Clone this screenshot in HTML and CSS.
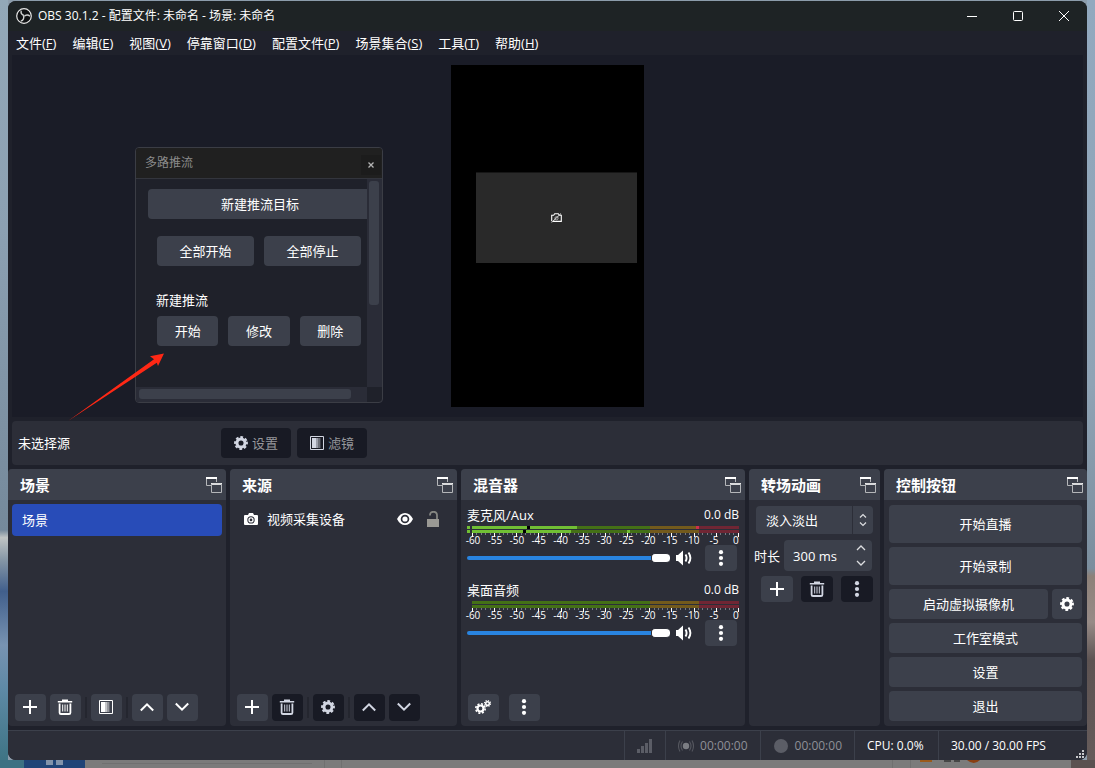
FILE: index.html
```html
<!DOCTYPE html>
<html lang="zh-CN">
<head>
<meta charset="utf-8">
<title>OBS 30.1.2</title>
<link rel="stylesheet" href="styles.css">
</head>
<body>
<svg class="sprite" aria-hidden="true">
  <symbol id="gear" viewBox="0 0 16 16"><g fill="none" stroke="currentColor"><circle cx="8" cy="8" r="4.6" stroke-width="3.4"/><circle cx="8" cy="8" r="6.8" stroke-width="2.2" stroke-dasharray="3.1 2.24" transform="rotate(-13 8 8)"/></g></symbol>
  <symbol id="gears" viewBox="0 0 18 16"><g fill="none" stroke="currentColor"><circle cx="6.5" cy="9.5" r="3" stroke-width="2.2"/><circle cx="6.5" cy="9.5" r="4.7" stroke-width="1.6" stroke-dasharray="2 1.69"/><circle cx="13.5" cy="4.5" r="1.8" stroke-width="1.5"/><circle cx="13.5" cy="4.5" r="3" stroke-width="1.2" stroke-dasharray="1.2 1.156"/></g></symbol>
  <symbol id="plus" viewBox="0 0 14 14"><path d="M7 0v14M0 7h14" stroke="currentColor" stroke-width="2"/></symbol>
  <symbol id="trash" viewBox="0 0 16 16"><path d="M5 1.2h6M.8 2.7h14.4" stroke="currentColor" stroke-width="1.6"/><path d="M2.6 4.5v9.2q0 1.3 1.4 1.3h8q1.400 0 1.400-1.300V4.500" fill="none" stroke="currentColor" stroke-width="1.800"/><path d="M5.700 5.500v7M8 5.500v7M10.300 5.500v7" stroke="currentColor" stroke-width="1"/></symbol>
  <symbol id="filter" viewBox="0 0 14 14"><path fill="none" stroke="currentColor" d="M.5.5h13v13H.5z"/><path fill="currentColor" d="M2 2h4v10H2z"/><path fill="currentColor" opacity=".7" d="M6 2h2v10H6z"/><path fill="currentColor" opacity=".45" d="M8 2h2v10H8z"/><path fill="currentColor" opacity=".2" d="M10 2h1v10h-1z"/></symbol>
  <symbol id="up" viewBox="0 0 14 14"><path d="M.8 10.500L7 4.300l6.200 6.200" fill="none" stroke="currentColor" stroke-width="2"/></symbol>
  <symbol id="down" viewBox="0 0 14 14"><path d="M.8 3.500L7 9.700l6.200-6.200" fill="none" stroke="currentColor" stroke-width="2"/></symbol>
  <symbol id="dots" viewBox="0 0 16 16"><g fill="currentColor"><circle cx="8" cy="2.200" r="2.100"/><circle cx="8" cy="8" r="2.100"/><circle cx="8" cy="13.800" r="2.100"/></g></symbol>
  <symbol id="popout" viewBox="0 0 16 16"><path d="M5 8.500H.5V1h10v4" fill="none" stroke="#b4b6b9"/><path d="M0 0h11v2H0zM5 6h11v2H5z" fill="#fff"/><path d="M5.500 7h10v8.500h-10z" fill="none" stroke="#b4b6b9"/></symbol>
  <symbol id="speaker" viewBox="0 0 16 16"><path d="M0 5h2l5-4.500v15L2 11H0z" fill="currentColor"/><path d="M9.500 4.500q2.200 3.500 0 7M12.500 2.500q3.800 5.500 0 11" fill="none" stroke="currentColor" stroke-width="1.900"/></symbol>
</svg>

<main class="window">
  <header class="titlebar">
    <svg class="logo" viewBox="0 0 16 16" aria-hidden="true"><circle cx="8" cy="8" r="7.300" fill="#101214" stroke="#e6e6e6" stroke-width="1.200"/><g fill="none" stroke="#d0d2d2" stroke-width="1.400"><path d="M5.200 2.700C4.600 5.200 6 7.200 8.200 7.500"/><path d="M5.200 2.700C4.600 5.200 6 7.200 8.200 7.500" transform="rotate(120 8 8)"/><path d="M5.200 2.700C4.600 5.200 6 7.200 8.200 7.500" transform="rotate(240 8 8)"/></g></svg>
    <h1>OBS 30.1.2 - 配置文件: 未命名 - 场景: 未命名</h1>
    <div class="window-buttons">
      <button aria-label="最小化"><svg viewBox="0 0 10 10"><path d="M0 5.500h10" stroke="#fff"/></svg></button>
      <button aria-label="最大化"><svg viewBox="0 0 10 10"><rect x=".5" y=".5" width="9" height="9" rx="1" fill="none" stroke="#fff"/></svg></button>
      <button aria-label="关闭"><svg viewBox="0 0 10 10"><path d="M0 0l10 10M10 0L0 10" stroke="#fff"/></svg></button>
    </div>
  </header>

  <nav class="menubar">
    <button>文件(<u>F</u>)</button><button>编辑(<u>E</u>)</button><button>视图(<u>V</u>)</button><button>停靠窗口(<u>D</u>)</button><button>配置文件(<u>P</u>)</button><button>场景集合(<u>S</u>)</button><button>工具(<u>T</u>)</button><button>帮助(<u>H</u>)</button>
  </nav>

  <section class="preview">
    <div class="canvas">
      <div class="source">
        <svg viewBox="0 0 11 10" aria-hidden="true"><path d="M.7 8.300V2.200h2l1-1.400h3.600l1 1.400h2v6.200H2" fill="none" stroke="#fff" stroke-width="1.100"/><circle cx="5.500" cy="5.200" r="1.600" fill="none" stroke="#aaa"/><path d="M.6 9.500L10 .5" stroke="#ddd"/></svg>
      </div>
    </div>

    <section class="float">
      <header class="float-title"><h2>多路推流</h2><button aria-label="关闭"><svg viewBox="0 0 6 6"><path d="M.5.5l5 5M5.500.5l-5 5" stroke="#b4b4b4" stroke-width="1.300"/></svg></button></header>
      <div class="float-body">
        <div class="viewport">
          <button class="btn target">新建推流目标</button>
          <div class="pair"><button class="btn">全部开始</button><button class="btn">全部停止</button></div>
          <p>新建推流</p>
          <div class="pair trio"><button class="btn">开始</button><button class="btn">修改</button><button class="btn">删除</button></div>
        </div>
        <div class="track vertical"><div class="thumb"></div></div>
        <div class="track horizontal"><div class="thumb"></div></div>
      </div>
    </section>
    <svg class="arrow" viewBox="0 0 96 68" aria-hidden="true"><path d="M0 68L86 6.200 82 3.200 96 .5 90 13 88.800 9.800Z" fill="#ff2815"/></svg>
  </section>

  <section class="context">
    <span class="context-label">未选择源</span>
    <button class="btn dark"><svg class="i14"><use href="#gear"/></svg>设置</button>
    <button class="btn dark"><svg class="i14"><use href="#filter"/></svg>滤镜</button>
  </section>

  <div class="docks">
    <section class="dock">
      <header><h2>场景</h2><button aria-label="浮动"><svg class="i16"><use href="#popout"/></svg></button></header>
      <ul class="scenes"><li>场景</li></ul>
      <div class="tools">
        <button class="btn" aria-label="添加"><svg class="i14"><use href="#plus"/></svg></button>
        <button class="btn" aria-label="删除"><svg class="i16"><use href="#trash"/></svg></button>
        <i></i>
        <button class="btn" aria-label="滤镜"><svg class="i14"><use href="#filter"/></svg></button>
        <i></i>
        <button class="btn" aria-label="上移"><svg class="i14"><use href="#up"/></svg></button>
        <button class="btn" aria-label="下移"><svg class="i14"><use href="#down"/></svg></button>
      </div>
    </section>

    <section class="dock">
      <header><h2>来源</h2><button aria-label="浮动"><svg class="i16"><use href="#popout"/></svg></button></header>
      <ul class="sources"><li>
        <svg class="i14" viewBox="0 0 14 14" aria-hidden="true"><path fill="#fff" fill-rule="evenodd" d="M1 3h3l1-2h4l1 2h3q1 0 1 1v8q0 1-1 1H1q-1 0-1-1V4q0-1 1-1zM7 4.200a3.700 3.700 0 1 0 0 7.400 3.700 3.700 0 1 0 0-7.400z"/><circle cx="7" cy="7.900" r="2" fill="none" stroke="#fff" stroke-width="1.300"/></svg>
        <span>视频采集设备</span>
        <button aria-label="显示"><svg class="i16" viewBox="0 0 16 16"><path fill="#fff" fill-rule="evenodd" d="M0 8q3-6 8-6t8 6q-3 6-8 6T0 8zm8-4.300a4.300 4.300 0 1 0 0 8.600 4.300 4.300 0 1 0 0-8.600z"/><circle cx="8" cy="8" r="2.600" fill="#fff"/></svg></button>
        <button aria-label="锁定"><svg class="i16" viewBox="0 0 16 16"><path fill="#9a9994" d="M2 8h12v8H2z"/><path d="M5 4.500q0-3.700 3.500-3.700T12 4.500V8" fill="none" stroke="#858682" stroke-width="1.800"/></svg></button>
      </li></ul>
      <div class="tools">
        <button class="btn" aria-label="添加"><svg class="i14"><use href="#plus"/></svg></button>
        <button class="btn dark" aria-label="删除"><svg class="i16"><use href="#trash"/></svg></button>
        <i></i>
        <button class="btn dark" aria-label="属性"><svg class="i14"><use href="#gear"/></svg></button>
        <i></i>
        <button class="btn dark" aria-label="上移"><svg class="i14"><use href="#up"/></svg></button>
        <button class="btn dark" aria-label="下移"><svg class="i14"><use href="#down"/></svg></button>
      </div>
    </section>

    <section class="dock">
      <header><h2>混音器</h2><button aria-label="浮动"><svg class="i16"><use href="#popout"/></svg></button></header>
      <div class="mixer">
        <div class="channel">
          <div class="channel-name"><label for="vol1">麦克风/Aux</label><span>0.0 dB</span></div>
          <svg class="meter" viewBox="0 0 272 11" preserveAspectRatio="none" shape-rendering="crispEdges" aria-hidden="true">
            <g id="bars"><path fill="#447016" d="M5 0h178v3H5zM5 4h178v3H5z"/><path fill="#735a1c" d="M183 0h49v3h-49zM183 4h49v3h-49z"/><path fill="#702634" d="M232 0h40v3h-40zM232 4h40v3h-40z"/></g>
            <path fill="#71bf34" d="M0 0h3v3H0zM0 4h3v3H0zM5 0h105v3H5zM5 4h99v3H5zM160 4h3v3h-3z"/><path fill="#000" d="M60 0h3v3h-3zM56 4h3v3h-3z"/><path fill="#cf2f4c" d="M229 0h3v3h-3z"/>
            <g id="ticks" fill="none"><path stroke="#777983" stroke-width="2" stroke-dasharray="1 3.430" d="M5 8h267"/><path stroke="#fff" stroke-width="4" stroke-dasharray="1 21.160" d="M5 9h268"/></g>
          </svg>
          <div class="scale"><span>-60</span><span>-55</span><span>-50</span><span>-45</span><span>-40</span><span>-35</span><span>-30</span><span>-25</span><span>-20</span><span>-15</span><span>-10</span><span>-5</span><span>0</span></div>
          <div class="volume"><input id="vol1" type="range" value="100"><button class="mute" aria-label="静音"><svg class="i16"><use href="#speaker"/></svg></button><button class="btn small" aria-label="选项"><svg class="i16"><use href="#dots"/></svg></button></div>
        </div>
        <div class="channel">
          <div class="channel-name"><label for="vol2">桌面音频</label><span>0.0 dB</span></div>
          <svg class="meter" viewBox="0 0 272 11" preserveAspectRatio="none" shape-rendering="crispEdges" aria-hidden="true"><use href="#bars"/><use href="#ticks"/></svg>
          <div class="scale"><span>-60</span><span>-55</span><span>-50</span><span>-45</span><span>-40</span><span>-35</span><span>-30</span><span>-25</span><span>-20</span><span>-15</span><span>-10</span><span>-5</span><span>0</span></div>
          <div class="volume"><input id="vol2" type="range" value="100"><button class="mute" aria-label="静音"><svg class="i16"><use href="#speaker"/></svg></button><button class="btn small" aria-label="选项"><svg class="i16"><use href="#dots"/></svg></button></div>
        </div>
      </div>
      <div class="tools">
        <button class="btn" aria-label="高级音频属性"><svg class="i18"><use href="#gears"/></svg></button>
        <i class="clear"></i>
        <button class="btn" aria-label="菜单"><svg class="i16"><use href="#dots"/></svg></button>
      </div>
    </section>

    <section class="dock">
      <header><h2>转场动画</h2><button aria-label="浮动"><svg class="i16"><use href="#popout"/></svg></button></header>
      <div class="transitions">
        <div class="combo">
          <select aria-label="转场"><option>淡入淡出</option></select>
          <span class="combo-arrows"><svg viewBox="0 0 8 14"><path d="M1 4.500l3-3 3 3M1 9.500l3 3 3-3" fill="none" stroke="#dcdde0" stroke-width="1.200"/></svg></span>
        </div>
        <div class="duration">
          <label for="duration">时长</label>
          <div class="spin"><input id="duration" type="text" value="300 ms"><span class="steps"><button aria-label="增加"><svg viewBox="0 0 10 6"><path d="M1 5l4-4 4 4" fill="none" stroke="#dcdde0" stroke-width="1.300"/></svg></button><button aria-label="减少"><svg viewBox="0 0 10 6"><path d="M1 1l4 4 4-4" fill="none" stroke="#dcdde0" stroke-width="1.300"/></svg></button></span></div>
        </div>
        <div class="transition-tools">
          <button class="btn small" aria-label="添加"><svg class="i14"><use href="#plus"/></svg></button>
          <button class="btn small dark" aria-label="删除"><svg class="i16"><use href="#trash"/></svg></button>
          <button class="btn small dark" aria-label="选项"><svg class="i16"><use href="#dots"/></svg></button>
        </div>
      </div>
    </section>

    <section class="dock">
      <header><h2>控制按钮</h2><button aria-label="浮动"><svg class="i16"><use href="#popout"/></svg></button></header>
      <div class="controls">
        <button class="btn tall">开始直播</button>
        <button class="btn tall">开始录制</button>
        <div class="vcam"><button class="btn">启动虚拟摄像机</button><button class="btn" aria-label="虚拟摄像机设置"><svg class="i14"><use href="#gear"/></svg></button></div>
        <button class="btn">工作室模式</button>
        <button class="btn">设置</button>
        <button class="btn">退出</button>
      </div>
    </section>
  </div>

  <footer class="status">
    <div class="cell"><svg class="i16" viewBox="0 0 16 16"><path fill="#5b5d66" d="M0 11h3v4H0zM4 8h3v7H4zM8 5h3v10H8zM12 1h3v14h-3z"/></svg></div>
    <div class="cell off"><svg class="i16" viewBox="0 0 16 16"><circle cx="8" cy="8" r="3.200" fill="#7b7d83"/><path d="M4.500 3.500q-3 4.500 0 9M11.500 3.500q3 4.500 0 9M2 2.500q-3 5.500 0 11M14 2.500q3 5.500 0 11" fill="none" stroke="#55575f" stroke-width="1.100"/></svg><span>00:00:00</span></div>
    <div class="cell off"><svg class="i16" viewBox="0 0 16 16"><circle cx="8" cy="8" r="7" fill="#5b5d66"/></svg><span>00:00:00</span></div>
    <div class="cell cpu">CPU: 0.0%</div>
    <div class="cell fps">30.00 / 30.00 FPS</div>
    <svg class="grip" viewBox="0 0 8 8" aria-hidden="true"><path fill="#c9cacd" d="M6 0h2v2H6zM3 3h2v2H3zM6 3h2v2H6zM0 6h2v2H0zM3 6h2v2H3zM6 6h2v2H6z"/></svg>
  </footer>
</main>
<svg class="behind" viewBox="0 0 1095 8" preserveAspectRatio="none" aria-hidden="true"><path fill="#3c7183" d="M0 0h24v8H0z"/><path fill="#204477" d="M24 0h61v8H24z"/><path fill="#8293ab" d="M46 0h7v5h-7zM56 0h7v5h-7z"/><path fill="#7b7b7b" d="M85 0h986v8H85z"/><path fill="#707070" d="M102 3h210v1H102zM324 0h1v8h-1zM341 0h1v8h-1zM892 0h1v8h-1zM910 0h1v8h-1z"/><path fill="#9a5a1b" d="M920 0h12v2h-12z"/><path fill="#474747" d="M944 0h7v2h-7zM954 0h6v2h-6z"/><path fill="#893f12" d="M967 0h13q-6 6-13 0z"/><path fill="#5b5150" d="M1071 0h24v8h-24z"/></svg>
</body>
</html>
```
FILE: styles.css
```css
* { box-sizing: border-box; }

body {
  margin: 0;
  height: 100vh;
  display: flex;
  flex-direction: column;
  padding-top: 1px;
  font: 13px/18px "Open Sans", "Noto Sans CJK SC", sans-serif;
  color: #fff;
  background:
    linear-gradient(#93a8b8 0, #8ca0b2 30%, #75899b 69%, #c0c4c4 70%, #8495a5 73%, #415f8c 77%, #7893b2 84%, #5d89a5 90%, #3b7180 100%) left / 8px 100% no-repeat,
    linear-gradient(#92a9bf 0, #8fa3b5 50%, #7b8e9e 74%, #8d8179 75%, #978b87 81%, #5d5352 86%, #665c5b 100%) right / 8px 100% no-repeat,
    #8c9cab;
}

h1, h2, p, ul { margin: 0; padding: 0; font: inherit; }
ul { list-style: none; }
svg { display: block; flex: none; }
button, input, select { font: inherit; color: inherit; margin: 0; border: 0; padding: 0; }
button { background: none; display: flex; align-items: center; justify-content: center; }

.sprite { position: absolute; width: 0; height: 0; }
.i14 { width: 14px; height: 14px; }
.i16 { width: 16px; height: 16px; }
.i18 { width: 18px; height: 16px; }

.window {
  flex: 1;
  min-height: 0;
  display: flex;
  flex-direction: column;
  margin: 0 8px;
  border-radius: 8px;
  background: #1f212b;
  overflow: hidden;
}

.titlebar { display: flex; align-items: center; height: 30px; padding-left: 8px; background: #1e2325; }
.logo { width: 16px; height: 16px; margin-right: 6px; }
.titlebar h1 { flex: 1; font-size: 12px; }
.window-buttons { display: flex; }
.window-buttons button { width: 46px; height: 30px; }
.window-buttons svg { width: 10px; height: 10px; }

.menubar { display: flex; height: 24px; }
.menubar button { padding: 0 8px; }

.preview {
  position: relative;
  flex: 1;
  min-height: 0;
  display: flex;
  justify-content: center;
  margin: 0 4px;
  padding: 10px;
  background: #1a1c27;
}
.canvas { height: 100%; aspect-ratio: 9 / 16; background: #000; padding: 107px 7px 0 25px; }
.source {
  display: flex;
  align-items: center;
  justify-content: center;
  height: 91px;
  background: #292929;
  border-top: 1px solid #161616;
}
.source svg { width: 11px; height: 10px; }

/* Undocked panel placed freely over the preview */
.float {
  position: absolute;
  left: 123px;
  top: 92px;
  width: 248px;
  border: 1px solid #3b3d45;
  border-radius: 4px;
  background: #1f212a;
  overflow: hidden;
}
.float-title { display: flex; justify-content: space-between; height: 31px; padding-left: 9px; background: #202020; border-bottom: 1px solid #33353d; }
.float-title h2 { font-size: 12px; line-height: 29px; color: #8b8b8b; }
.float-title button { width: 20px; height: 20px; margin: 7px 1px 0 0; background: #1c1c1c; }
.float-title svg { width: 6px; height: 6px; }
.float-body { display: grid; grid-template: 208px 15px / 1fr 15px; }
.viewport { overflow: hidden; padding: 10px 6px 0 12px; }
.viewport p { margin: 25px 0 7px 8px; }
.viewport .target { width: 224px; border-radius: 4px 0 0 4px; }
.pair { display: flex; gap: 10px; margin: 17px 0 0 9px; }
.pair .btn { flex: 1; }
.trio { margin-top: 0; }
.track { background: #2a2c37; padding: 2px 3px 2px 2px; }
.track .thumb { background: #3c404b; border-radius: 3px; }
.vertical .thumb { height: 124px; }
.horizontal { padding: 2px 3px; }
.horizontal .thumb { width: 212px; height: 10px; }

.arrow { position: absolute; left: 56px; top: 298px; width: 96px; height: 68px; z-index: 1; }

.btn {
  height: 30px;
  border-radius: 4px;
  background: #3c404b;
}
.btn.dark { background: #181a24; color: #d2d6e2; }
.btn.small { width: 32px; height: 26px; }

.context { display: flex; align-items: center; gap: 6px; height: 44px; margin: 4px; padding-left: 6px; border-radius: 4px; background: #2c2e38; }
.context-label { width: 197px; }
.context .btn { width: 70px; gap: 4px; color: #96979b; }
.context .btn svg { color: #d2d6e2; }

.docks { display: grid; grid-template-columns: 218fr 227fr 284fr 131fr 203fr; gap: 4px; }
.dock { display: flex; flex-direction: column; min-width: 0; min-height: 257px; border-radius: 4px; background: #2c2e38; overflow: hidden; }
.dock > header { display: flex; align-items: center; justify-content: space-between; height: 31px; padding: 0 4px 0 12px; background: #3c404b; }
.dock h2 { font-size: 15px; font-weight: 700; }

.scenes { padding: 4px; }
.scenes li { padding: 7px 10px; border-radius: 4px; background: #284cb8; }
.sources li { display: flex; align-items: center; height: 38px; padding: 0 16px 0 14px; }
.sources span { flex: 1; padding-left: 9px; }
.sources button + button { margin-left: 12px; }

.tools { display: flex; gap: 4px; margin-top: auto; padding: 0 7px 5px; }
.tools .btn { width: 31px; height: 27px; padding: 0 1px 1px 0; }
.tools i { width: 2px; height: 21px; margin: 3px 0; background: #24262f; }
.tools .clear { background: none; }

.mixer { display: flex; flex-direction: column; gap: 10px; padding: 6px 6px 0; }
.channel-name { display: flex; justify-content: space-between; }
.channel-name span { font-size: 12px; }
.meter { width: 100%; height: 11px; margin-top: 2px; }
.scale { display: flex; justify-content: space-between; height: 8px; padding: 0 3px 0 6px; font-size: 10px; line-height: 6px; }
.scale span { display: flex; justify-content: center; width: 0; }
.volume { display: flex; align-items: center; padding-right: 2px; }
.volume input { appearance: none; flex: 1; min-width: 0; height: 10px; background: none; }
.volume input::-webkit-slider-runnable-track { height: 4px; border-radius: 2px; background: #2984e0; }
.volume input::-webkit-slider-thumb { appearance: none; width: 19px; height: 10px; margin-top: -3px; border: 1px solid #2c2e38; border-right: 0; border-radius: 4px; background: #fff; }
.mute { margin: 0 13px 0 6px; }

.transitions { display: flex; flex-direction: column; gap: 5px; padding: 6px 7px 0 5px; }
.combo { display: grid; grid-template-columns: 1fr 20px; gap: 1px; height: 28px; margin: 0 0 1px 2px; }
.combo select { appearance: none; min-width: 0; padding-left: 10px; background: #3c404b; border-radius: 4px 0 0 4px; }
.combo-arrows { display: flex; align-items: center; justify-content: center; background: #3c404b; border-radius: 0 4px 4px 0; }
.combo-arrows svg { width: 8px; height: 14px; }
.duration { display: flex; align-items: center; gap: 4px; }
.duration label { flex: none; }
.spin { flex: 1; display: flex; min-width: 0; height: 31px; margin-right: 1px; padding: 0 6px 0 9px; border-radius: 4px; background: #3c404b; }
.spin input { flex: 1; min-width: 0; background: none; }
.steps { display: flex; flex-direction: column; justify-content: space-around; }
.steps svg { width: 10px; height: 6px; }
.transition-tools { display: flex; justify-content: flex-end; gap: 8px; }

.controls { display: flex; flex-direction: column; gap: 4px; padding: 5px; }
.controls .tall { height: 38px; }
.vcam { display: grid; grid-template-columns: 1fr 30px; gap: 4px; }

.status { position: relative; display: flex; justify-content: flex-end; height: 30px; margin-top: 4px; border-top: 1px solid #3c404b; background: #2c2e38; font-size: 12px; }
.cell { display: flex; align-items: center; gap: 6px; padding: 0 12px; border-left: 1px solid #3c404b; }
.off { color: #8e9097; }
.cpu { width: 84px; }
.fps { width: 149px; }
.grip { position: absolute; right: 3px; bottom: 2px; width: 8px; height: 8px; }

.titlebar, .menubar, .context, .docks, .status, .behind { flex: none; }
.behind { width: 100%; height: 8px; }
```
